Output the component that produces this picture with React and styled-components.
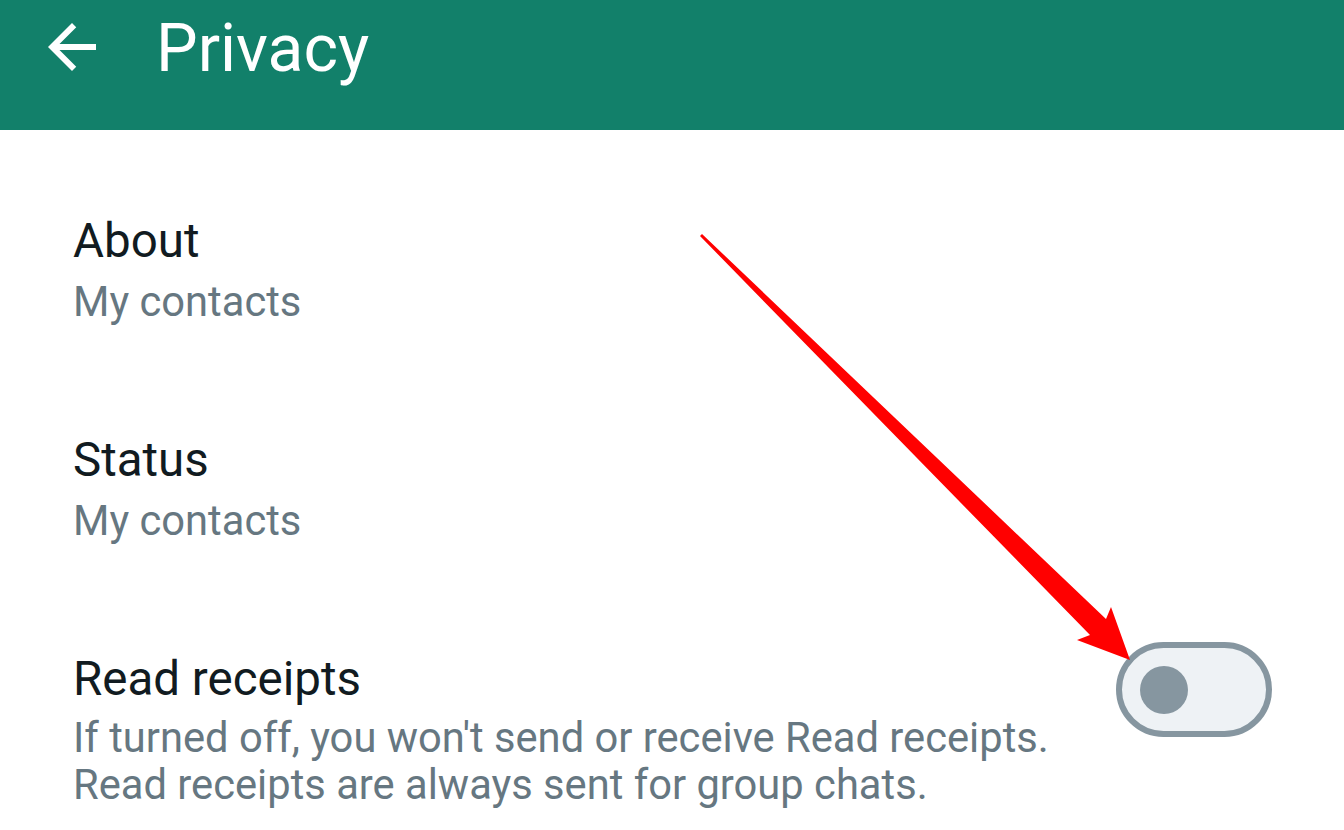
import React from 'react';
import styled, { createGlobalStyle } from 'styled-components';

const GlobalStyle = createGlobalStyle`
  body {
    margin: 0;
    background: #ffffff;
    font-family: Roboto, "Noto Sans", "Liberation Sans", sans-serif;
  }
`;

const items = [
  { title: 'About', sub: 'My contacts' },
  { title: 'Status', sub: 'My contacts' },
];

const App = () => {
  return (
    <Page>
      <GlobalStyle />
      <Header>
        <BackIcon viewBox="0 0 24 24">
          <path d="M20 11H7.83l5.59-5.59L12 4l-8 8 8 8 1.41-1.41L7.83 13H20v-2z" fill="#ffffff" />
        </BackIcon>
        <HeaderTitle>Privacy</HeaderTitle>
      </Header>
      <List>
        {items.map((item) => (
          <Row key={item.title}>
            <RowText>
              <RowTitle>{item.title}</RowTitle>
              <RowSub>{item.sub}</RowSub>
            </RowText>
          </Row>
        ))}
        <Row>
          <RowText>
            <RowTitle>Read receipts</RowTitle>
            <RowDesc>
              If turned off, you won't send or receive Read receipts.
              <br />
              Read receipts are always sent for group chats.
            </RowDesc>
          </RowText>
          <Toggle>
            <Knob />
          </Toggle>
        </Row>
      </List>
      <Annotation viewBox="0 0 1344 830">
        <polygon
          points="700,236 702,234 1106,619 1111,607 1130,660 1077,640 1090,635"
          fill="#ff0000"
        />
      </Annotation>
    </Page>
  );
};

const Page = styled.div`
  position: relative;
  width: 1344px;
  height: 830px;
  overflow: hidden;
  background: #ffffff;
`;

const Header = styled.div`
  height: 130px;
  background-color: #12806a;
  display: flex;
  align-items: center;
  padding-left: 36px;
  box-sizing: border-box;
`;

const BackIcon = styled.svg`
  width: 72px;
  height: 72px;
  margin-top: -36px;
  flex-shrink: 0;
`;

const HeaderTitle = styled.div`
  color: #ffffff;
  font-size: 66px;
  line-height: 80px;
  margin-left: 48px;
  margin-top: -32px;
`;

const List = styled.div`
  display: flex;
  flex-direction: column;
  gap: 104px;
  padding: 83px 72px 0 73px;
`;

const Row = styled.div`
  display: flex;
  align-items: flex-start;
  justify-content: space-between;
`;

const RowText = styled.div`
  display: flex;
  flex-direction: column;
  gap: 7px;
`;

const RowTitle = styled.div`
  font-size: 47.5px;
  line-height: 56px;
  color: #111b21;
`;

const RowSub = styled.div`
  font-size: 41.7px;
  line-height: 52px;
  color: #667781;
`;

const RowDesc = styled.div`
  font-size: 41.7px;
  line-height: 47px;
  color: #667781;
  white-space: nowrap;
`;

const Toggle = styled.div`
  width: 156px;
  height: 95px;
  margin-top: -9px;
  box-sizing: border-box;
  border: 6px solid #8696a0;
  border-radius: 48px;
  background: #eef2f5;
  display: flex;
  align-items: center;
  padding-left: 18px;
  flex-shrink: 0;
`;

const Knob = styled.div`
  width: 48px;
  height: 48px;
  border-radius: 50%;
  background: #8696a0;
`;

const Annotation = styled.svg`
  position: absolute;
  top: 0;
  left: 0;
  width: 1344px;
  height: 830px;
  pointer-events: none;
`;

export default App;
